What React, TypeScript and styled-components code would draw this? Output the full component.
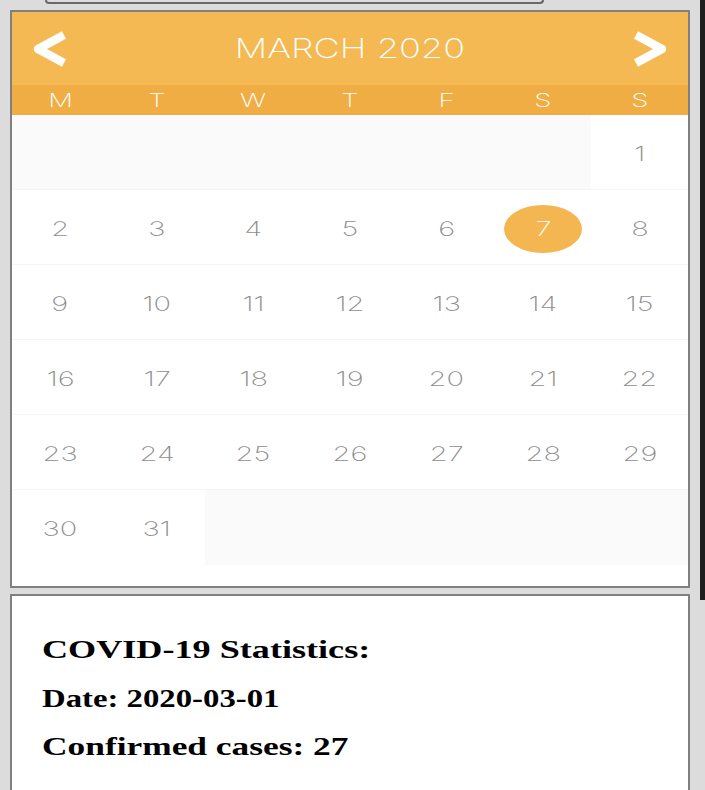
import React from "react";
import styled, { createGlobalStyle } from "styled-components";

const Global = createGlobalStyle`
  html, body { margin: 0; padding: 0; background: #dcdcdc; }
  body { font-family: "Liberation Sans", Arial, sans-serif; }
`;

const Page = styled.div`
  display: grid;
  grid-template-columns: 700px 5px;
  align-items: start;
  width: 705px;
  height: 790px;
  overflow: hidden;
`;

const Main = styled.div`
  padding: 0 10px;
  display: flex;
  flex-direction: column;
`;

const Strip = styled.div`
  height: 600px;
  background: #1f1f1f;
`;

const TopTab = styled.div`
  margin-left: 35px;
  width: 495px;
  height: 2px;
  border: 2px solid #6a6a6a;
  border-top: none;
  border-radius: 0 0 12px 12px;
`;

const Card = styled.div`
  margin-top: 6px;
  border: 2px solid #808080;
  background: #fff;
`;

const CalendarCard = styled(Card)`
  padding-bottom: 21px;
`;

const Header = styled.div`
  height: 73px;
  background: #f4b952;
  display: flex;
  align-items: center;
  justify-content: space-between;
  padding: 0 17px;
`;

const Stretch = styled.span<{ $k?: number; $origin?: string }>`
  display: inline-block;
  transform: scaleX(${(p) => p.$k ?? 1.3});
  transform-origin: ${(p) => p.$origin ?? "center"};
`;

const Title = styled.div`
  font-family: Inter, Roboto, "Liberation Sans", sans-serif;
  font-weight: 200;
  font-size: 27px;
  color: #fff;
  line-height: 1;
`;

const WeekRow = styled.div`
  height: 30px;
  background: #f0ad44;
  display: grid;
  grid-template-columns: repeat(7, 1fr);
  align-items: center;
`;

const WeekDay = styled.div`
  text-align: center;
  font-family: Inter, Roboto, "Liberation Sans", sans-serif;
  font-weight: 200;
  font-size: 19px;
  color: #fff;
  line-height: 1;
`;

const DayGrid = styled.div`
  display: grid;
  grid-template-columns: repeat(7, 1fr);
  grid-auto-rows: 75px;
`;

const Cell = styled.div<{ $empty?: boolean; $line?: boolean }>`
  display: flex;
  align-items: center;
  justify-content: center;
  padding-top: 4px;
  background: ${(p) => (p.$empty ? "#fafafa" : "#fff")};
  border-bottom: 1px solid ${(p) => (p.$line ? "#f5f5f5" : "transparent")};
  box-sizing: border-box;
`;

const DayNum = styled.div<{ $selected?: boolean }>`
  width: 78px;
  height: 48px;
  border-radius: 50%;
  display: flex;
  align-items: center;
  justify-content: center;
  background: ${(p) => (p.$selected ? "#f4b650" : "transparent")};
  color: ${(p) => (p.$selected ? "#fff" : "#8e8e8e")};
  font-family: Inter, Roboto, "Liberation Sans", sans-serif;
  font-weight: 200;
  font-size: 20px;
  line-height: 1;
`;

const StatsCard = styled(Card)`
  height: 230px;
  padding: 39px 30px 0;
`;

const StatLine = styled.p`
  margin: 0 0 18.5px;
  font-family: "Liberation Serif", "Times New Roman", serif;
  font-weight: bold;
  font-size: 26px;
  line-height: 30px;
  color: #000;
  white-space: nowrap;
`;

const Chevron = ({ dir }: { dir: "left" | "right" }) => (
  <svg width="40" height="40" viewBox="0 0 40 40" aria-hidden="true">
    <polyline
      points={dir === "left" ? "35,6 9,20 35,34" : "5,6 31,20 5,34"}
      fill="none"
      stroke="#fff"
      strokeWidth="8.5"
      strokeLinejoin="round"
    />
  </svg>
);

const WEEK = ["M", "T", "W", "T", "F", "S", "S"];

export default function App() {
  const cells: (number | null)[] = [];
  for (let i = 0; i < 6; i++) cells.push(null);
  for (let d = 1; d <= 31; d++) cells.push(d);
  while (cells.length < 42) cells.push(null);

  return (
    <>
      <Global />
      <Page>
        <Main>
          <TopTab />
          <CalendarCard>
            <Header>
              <Chevron dir="left" />
              <Title>
                <Stretch $k={1.34}>MARCH 2020</Stretch>
              </Title>
              <Chevron dir="right" />
            </Header>
            <WeekRow>
              {WEEK.map((w, i) => (
                <WeekDay key={i}>
                  <Stretch $k={1.45}>{w}</Stretch>
                </WeekDay>
              ))}
            </WeekRow>
            <DayGrid>
              {cells.map((d, i) => (
                <Cell key={i} $empty={d === null} $line={i < 35}>
                  {d !== null && (
                    <DayNum $selected={d === 7}>
                      <Stretch $k={1.45}>{d}</Stretch>
                    </DayNum>
                  )}
                </Cell>
              ))}
            </DayGrid>
          </CalendarCard>
          <StatsCard>
            <StatLine>
              <Stretch $k={1.39} $origin="left">COVID-19 Statistics:</Stretch>
            </StatLine>
            <StatLine>
              <Stretch $k={1.26} $origin="left">Date: 2020-03-01</Stretch>
            </StatLine>
            <StatLine>
              <Stretch $k={1.36} $origin="left">Confirmed cases: 27</Stretch>
            </StatLine>
          </StatsCard>
        </Main>
        <Strip />
      </Page>
    </>
  );
}
